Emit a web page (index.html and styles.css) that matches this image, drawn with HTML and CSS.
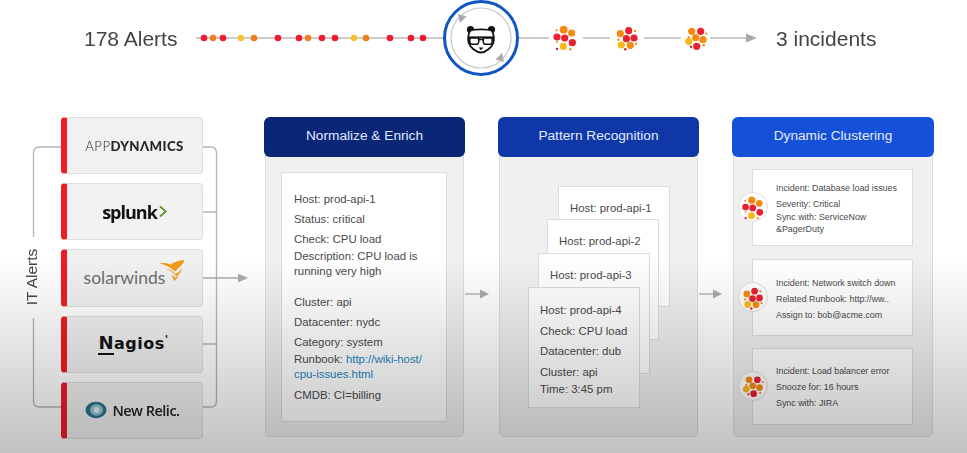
FILE: index.html
```html
<!DOCTYPE html>
<html>
<head>
<meta charset="utf-8">
<title>Alerts to incidents</title>
<link rel="stylesheet" href="styles.css">
</head>
<body>
<div class="page">

  <!-- top strip: alerts go through the panda and come out as incidents -->
  <div class="strip">
    <span class="strip-label alerts-label">178 Alerts</span>
    <svg class="flow" width="562" height="77" viewBox="196 0 562 77">
      <defs>
        <symbol id="cluster1" viewBox="-14 -14 28 28" overflow="visible">
          <circle cx="-1.3" cy="-7.3" r="3.9" fill="#f58a12"/><circle cx="6.7" cy="-4" r="3.6" fill="#f58a12"/>
          <circle cx="-8" cy="0" r="3.6" fill="#e8202f"/><circle cx="-.3" cy="1" r="3.6" fill="#e8202f"/>
          <circle cx="7.3" cy="5.7" r="3.6" fill="#e8202f"/><circle cx="-1.7" cy="9.3" r="3.6" fill="#fbb716"/>
          <circle cx="-8.3" cy="-6.7" r="1.1" fill="#f58a12"/><circle cx="-8" cy="5" r="1" fill="#f58a12"/>
          <circle cx="-8" cy="12" r="1.2" fill="#d3202c"/><circle cx="5.3" cy="12.3" r="1.2" fill="#f58a12"/>
        </symbol>
        <symbol id="cluster2" viewBox="-14 -14 28 28" overflow="visible">
          <circle cx="-6.7" cy="-3.3" r="3.6" fill="#f58a12"/><circle cx="1.7" cy="-6.3" r="3.6" fill="#e8202f"/>
          <circle cx="-.6" cy="1.7" r="3.6" fill="#e8202f"/><circle cx="7" cy="1" r="3.6" fill="#e8202f"/>
          <circle cx="-5.7" cy="8" r="3.6" fill="#fbb716"/><circle cx="3.3" cy="8.3" r="3.6" fill="#f58a12"/>
          <circle cx="8" cy="-6" r="1.2" fill="#f58a12"/><circle cx="-8.7" cy="2.7" r="1.2" fill="#f58a12"/>
          <circle cx="9.3" cy="6.7" r="1.2" fill="#f58a12"/><circle cx="-1.7" cy="12.3" r="1.3" fill="#d3202c"/>
        </symbol>
        <symbol id="cluster3" viewBox="-14 -14 28 28" overflow="visible">
          <circle cx="-4.3" cy="-6.7" r="3.6" fill="#f58a12"/><circle cx="4.7" cy="-6.7" r="3.6" fill="#e8202f"/>
          <circle cx="-.3" cy="-.3" r="3.6" fill="#f58a12"/><circle cx="7" cy="1.7" r="3.6" fill="#f58a12"/>
          <circle cx="-7.3" cy="3.3" r="3.6" fill="#fbb716"/><circle cx=".7" cy="8.3" r="3.6" fill="#e8202f"/>
          <circle cx="-7.3" cy="-1" r="1.1" fill="#f58a12"/><circle cx="-5" cy="9" r="1.2" fill="#d3202c"/>
          <circle cx="7.7" cy="7.3" r="1.2" fill="#f58a12"/><circle cx="10.3" cy="-4.3" r="1.1" fill="#f58a12"/>
        </symbol>
        <symbol id="panda" viewBox="466 24 30 30">
          <circle cx="470.500" cy="29.500" r="3.600" fill="#111"/><circle cx="491.500" cy="29.500" r="3.600" fill="#111"/>
          <path d="M470 31c3-2.200 19-2.200 22 0 2 3 2.300 9 1.300 12-1.500 4-7.300 9.500-12.300 9.500s-10.800-5.500-12.300-9.500c-1-3-.7-9 1.300-12z" fill="#fff" stroke="#111" stroke-width="1.800"/>
          <path d="M468 37.400h26" stroke="#111" stroke-width="2"/>
          <path d="M470 38h8.500c.6 2.500.3 5-1 6.300h-6.500c-1.300-1.300-1.500-3.800-1-6.300zM483.500 38h8.500c.5 2.500.3 5-1 6.300h-6.500c-1.300-1.300-1.600-3.800-1-6.300z" fill="#fff" stroke="#111" stroke-width="1.500"/>
          <path d="M478.500 39.500h5" stroke="#111" stroke-width="1.500"/>
          <path d="M478.600 47.600h4.800l-2.400 2.600z" fill="#111"/>
        </symbol>
      </defs>
      <path d="M196 38H444M519 38H549M583 38H610M644 38H681M710 38H748" stroke="#bbb" stroke-width="1.500" fill="none"/>
      <path d="M746 33.500L757 38L746 42.500z" fill="#aaa"/>
      <g fill="#ee1c30">
        <circle cx="204" cy="38" r="3.300"/><circle cx="223" cy="38" r="3.300"/><circle cx="278" cy="38" r="3.300"/>
        <circle cx="299" cy="38" r="3.300"/><circle cx="322" cy="38" r="3.300"/><circle cx="335" cy="38" r="3.300"/>
        <circle cx="390" cy="38" r="3.300"/><circle cx="411" cy="38" r="3.300"/><circle cx="423" cy="38" r="3.300"/>
      </g>
      <g fill="#ee7f22">
        <circle cx="213" cy="38" r="3.300"/><circle cx="254" cy="38" r="3.300"/><circle cx="308" cy="38" r="3.300"/><circle cx="366" cy="38" r="3.300"/>
      </g>
      <g fill="#f4c430">
        <circle cx="241" cy="38" r="3.300"/><circle cx="354" cy="38" r="3.300"/>
      </g>
      <circle cx="481" cy="38" r="36.500" fill="#fff" stroke="#0f55c4" stroke-width="3"/>
      <circle cx="481" cy="38" r="30" fill="none" stroke="#c9c9c9" stroke-width="1.200"/>
      <path d="M458 14l8.500 2.500-6.500 6.500z" fill="#aaa"/>
      <path d="M504 62l-8.500-2.500 6.500-6.500z" fill="#aaa"/>
      <use href="#panda" x="466" y="24" width="30" height="30"/>
      <use href="#cluster1" x="551" y="23" width="28" height="28"/>
      <use href="#cluster2" x="613" y="23" width="28" height="28"/>
      <use href="#cluster3" x="682" y="24" width="28" height="28"/>
    </svg>
    <span class="strip-label incidents-label">3 incidents</span>
  </div>

  <div class="diagram">
    <svg class="bracket-left" width="37" height="320" viewBox="0 0 37 320">
      <path d="M9.500 120V36q0-6 6-6H37M9.500 201V284q0 6 6 6H37" fill="none" stroke="#b5b5b5" stroke-width="1.300"/>
      <text class="it-alerts" transform="translate(13 160) rotate(-90)" text-anchor="middle">IT Alerts</text>
    </svg>

    <div class="sources">
      <div class="source"><span class="logo-appd"><span class="thin">APP</span>DYNΛMICS</span></div>
      <div class="source">
        <span class="logo-splunk">splunk</span>
        <svg class="chevron" width="8" height="13" viewBox="0 0 8 13"><path d="M1 1.500L6.800 6.500L1 11.500" fill="none" stroke="#6a9a2c" stroke-width="2"/></svg>
      </div>
      <div class="source">
        <span class="logo-solar">solarwinds</span>
        <svg class="flame" width="26" height="21" viewBox="0 0 26 21">
          <path d="M0 3.500C4 2.500 8 3 11.500 4.500 15 2 20 .5 25.500 0c-.8 2.800-2.400 5.200-5 7-1.300 1.500-2.700 3-4.500 4.500C12 7.500 6.500 4.500 0 3.500z" fill="#f39a1c"/>
          <path d="M6.500 8.500c4.500.5 7.500 3 10 5.500 2.500-1.200 4.600-3 7-5.500-1.200 3.300-3.200 6-6 8C14.500 13 11 10.300 6.500 8.500z" fill="#f39a1c"/>
          <path d="M12 15c1.800.5 3.200 1.300 4.500 2.700l3.500-1.700c-1.300 2-3 3.700-5 5-.5-2.300-1.500-4.300-3-6z" fill="#f39a1c"/>
        </svg>
      </div>
      <div class="source"><span class="logo-nagios"><span class="big-n">N</span>agios<sup class="mark">'</sup></span></div>
      <div class="source">
        <svg class="relic" width="22" height="18" viewBox="0 0 22 18">
          <ellipse cx="11" cy="9" rx="10.500" ry="8.200" fill="#2c7389"/>
          <ellipse cx="11.500" cy="9" rx="6.500" ry="5.800" fill="#8fc3d0"/>
          <ellipse cx="11.500" cy="9" rx="3" ry="3" fill="#d9edf1"/>
        </svg>
        <span class="logo-relic">New Relic.</span>
      </div>
    </div>

    <svg class="bracket-right" width="61" height="320" viewBox="0 0 61 320">
      <path d="M0 30H7.500q6 0 6 6V284q0 6-6 6H0M0 95H13.500M0 227H13.500" fill="none" stroke="#b5b5b5" stroke-width="1.300"/>
      <path d="M0 161H36" stroke="#aaa" stroke-width="1.300"/>
      <path d="M35 156.500L45 161L35 165.500z" fill="#aaa"/>
    </svg>

    <section class="panel panel-normalize">
      <h2 class="panel-title">Normalize &amp; Enrich</h2>
      <div class="panel-body">
        <div class="alert-box">
          <p>Host: prod-api-1</p>
          <p>Status: critical</p>
          <p class="tight">Check: CPU load</p>
          <p class="wide">Description: CPU load is<br>running very high</p>
          <p>Cluster: api</p>
          <p>Datacenter: nydc</p>
          <p class="tight">Category: system</p>
          <p class="mid">Runbook: <a class="runbook" href="#">http://wiki-host/<br>cpu-issues.html</a></p>
          <p>CMDB: CI=billing</p>
        </div>
      </div>
    </section>

    <svg class="arrow" width="33" height="320" viewBox="0 0 33 320">
      <path d="M0 177H17" stroke="#aaa" stroke-width="1.300"/>
      <path d="M15 172.500L24 177L15 181.500z" fill="#aaa"/>
    </svg>

    <section class="panel panel-pattern">
      <h2 class="panel-title">Pattern Recognition</h2>
      <div class="panel-body stack">
        <div class="host-card card-1"><p>Host: prod-api-1</p></div>
        <div class="host-card card-2"><p>Host: prod-api-2</p></div>
        <div class="host-card card-3"><p>Host: prod-api-3</p></div>
        <div class="host-card card-4">
          <p>Host: prod-api-4</p>
          <p>Check: CPU load</p>
          <p>Datacenter: dub</p>
          <p class="tight">Cluster: api</p>
          <p>Time: 3:45 pm</p>
        </div>
      </div>
    </section>

    <svg class="arrow" width="33" height="320" viewBox="0 0 33 320">
      <path d="M0 177H16" stroke="#aaa" stroke-width="1.300"/>
      <path d="M14 172.500L23 177L14 181.500z" fill="#aaa"/>
    </svg>

    <section class="panel panel-cluster">
      <h2 class="panel-title">Dynamic Clustering</h2>
      <div class="panel-body incidents">
        <div class="incident">
          <span class="badge"><svg width="26" height="26"><use href="#cluster1" width="26" height="26"/></svg></span>
          <div class="incident-text first">
            <p>Incident: Database load issues</p>
            <p class="tight">Severity: Critical</p>
            <p class="tight">Sync with: ServiceNow</p>
            <p>&amp;PagerDuty</p>
          </div>
        </div>
        <div class="incident">
          <span class="badge"><svg width="26" height="26"><use href="#cluster2" width="26" height="26"/></svg></span>
          <div class="incident-text second">
            <p>Incident: Network switch down</p>
            <p>Related Runbook: http://ww..</p>
            <p>Assign to: bob@acme.com</p>
          </div>
        </div>
        <div class="incident">
          <span class="badge"><svg width="26" height="26"><use href="#cluster3" width="26" height="26"/></svg></span>
          <div class="incident-text third">
            <p>Incident: Load balancer error</p>
            <p>Snooze for: 16 hours</p>
            <p>Sync with: JIRA</p>
          </div>
        </div>
      </div>
    </section>
  </div>

</div>
</body>
</html>
```

FILE: styles.css
```css
html, body {
    margin: 0;
    padding: 0;
    background: #fff;
}

p {
    margin: 0;
}

.page {
    position: relative;
    width: 967px;
    height: 453px;
    overflow: hidden;
    font-family: "Liberation Sans", Arial, sans-serif;
    color: #4a4a4a;
    filter: blur(.4px);
}

/* the video player's dark fade along the bottom, it sits over everything */
.page::after {
    content: "";
    position: absolute;
    left: 0;
    right: 0;
    top: 258px;
    bottom: 0;
    background: linear-gradient(to bottom, rgba(0,0,0,0), rgba(0,0,0,0.24));
    pointer-events: none;
}

.strip {
    display: flex;
    align-items: center;
    height: 77px;
    padding-left: 84px;
}
.strip-label {
    font-size: 21px;
    color: #444;
    white-space: nowrap;
}
.alerts-label {
    width: 112px;
}
.incidents-label {
    margin-left: 18px;
}
.flow {
    flex: none;
}

.diagram {
    display: flex;
    align-items: flex-start;
    margin-top: 40px;
    padding-left: 24px;
}
.diagram > svg {
    flex: none;
}
.it-alerts {
    font-size: 15.5px;
    fill: #444;
}

.sources {
    display: flex;
    flex-direction: column;
    gap: 9px;
    width: 142px;
}
.source {
    display: flex;
    align-items: center;
    justify-content: center;
    box-sizing: border-box;
    height: 57.200px;
    background: #f1f1f1;
    border: 1px solid #dedede;
    border-left: 6px solid #ee1c25;
    border-radius: 4px;
}

.logo-appd {
    font-family: "Lato", sans-serif;
    font-size: 13.200px;
    font-weight: 900;
    letter-spacing: .4px;
    color: #26262c;
}
.logo-appd .thin {
    font-weight: 300;
}
.logo-splunk {
    font-family: "Open Sans", sans-serif;
    font-size: 18px;
    font-weight: 700;
    letter-spacing: -1px;
    color: #111;
}
.chevron {
    margin-left: 2px;
}
.logo-solar {
    font-family: "Lato", sans-serif;
    font-size: 17.500px;
    color: #6f6f6f;
}
.flame {
    margin: -15px 0 0 -6px;
}
.logo-nagios {
    font-family: "DejaVu Sans", sans-serif;
    font-size: 16px;
    font-weight: 700;
    color: #141414;
    letter-spacing: .5px;
    margin: -3px 2px 0 0;
}
.big-n {
    font-size: 18px;
    border-bottom: 2px solid #141414;
}
.mark {
    font-size: 11px;
    line-height: 0;
}
.relic {
    margin-right: 5px;
}
.logo-relic {
    font-family: "Open Sans", sans-serif;
    font-size: 14.500px;
    font-weight: 600;
    letter-spacing: -.5px;
    color: #222;
    margin-right: 4px;
}

.panel {
    flex: none;
    width: 201px;
}
.panel-title {
    margin: 0;
    height: 40px;
    line-height: 38px;
    text-align: center;
    font-size: 13.700px;
    font-weight: 400;
    color: #e3ebff;
    border-radius: 6px;
    position: relative;
}
.panel-normalize .panel-title { background: #0a2677; }
.panel-pattern .panel-title { background: #0f37a8; }
.panel-cluster .panel-title { background: #1450d8; }
.panel-cluster { width: 202px; }

.panel-body {
    box-sizing: border-box;
    height: 283px;
    margin: -3px 1px 0;
    background: #f0f0f0;
    border: 1px solid #dcdcdc;
    border-radius: 0 0 5px 5px;
}

.alert-box {
    box-sizing: border-box;
    width: 166px;
    height: 250px;
    margin: 17px 0 0 15px;
    padding: 19px 0 0 12px;
    background: #fff;
    border: 1px solid #dcdcdc;
    font-size: 11.400px;
    line-height: 15px;
}
.alert-box p {
    margin-bottom: 5px;
}
.alert-box .tight {
    margin-bottom: 2px;
}
.alert-box .wide {
    margin-bottom: 16px;
}
.alert-box .mid {
    margin-bottom: 6px;
}
.runbook {
    color: #2384c6;
    text-decoration: none;
}

/* the four host cards share one grid cell so they pile up */
.stack {
    display: grid;
    grid-template-columns: 1fr;
    align-content: start;
}
.host-card {
    grid-area: 1 / 1;
    box-sizing: border-box;
    width: 112px;
    height: 121px;
    padding: 14px 0 0 11px;
    background: #fff;
    border: 1.500px solid #dcdcdc;
    font-size: 11.400px;
    line-height: 15px;
}
.host-card p {
    margin-bottom: 5.500px;
}
.host-card .tight {
    margin-bottom: 2px;
}
.card-1 { margin: 31px 0 0 58px; }
.card-2 { margin: 64px 0 0 47px; }
.card-3 { margin: 98px 0 0 38px; }
.card-4 { margin: 132px 0 0 28px; padding-top: 15px; }

.incidents {
    display: flex;
    flex-direction: column;
    gap: 12.500px;
    padding: 14px 0 0 18px;
}
.incident {
    display: flex;
    align-items: flex-start;
    box-sizing: border-box;
    width: 161px;
    height: 77px;
    background: #fff;
    border: 1.500px solid #dcdcdc;
    font-size: 8.900px;
}
.badge {
    flex: none;
    display: flex;
    align-items: center;
    justify-content: center;
    box-sizing: border-box;
    width: 30px;
    height: 30px;
    margin: 22px 8px 0 -15px;
    background: #fff;
    border: 1.500px solid #e0dcd8;
    border-radius: 50%;
}
.incident-text {
    line-height: 12px;
}
.incident-text p {
    margin-bottom: 4px;
}
.incident-text .tight {
    margin-bottom: 0.500px;
}
.incident-text.first { padding-top: 12px; }
.incident-text.second { padding-top: 17px; }
.incident-text.third { padding-top: 16px; }
```
